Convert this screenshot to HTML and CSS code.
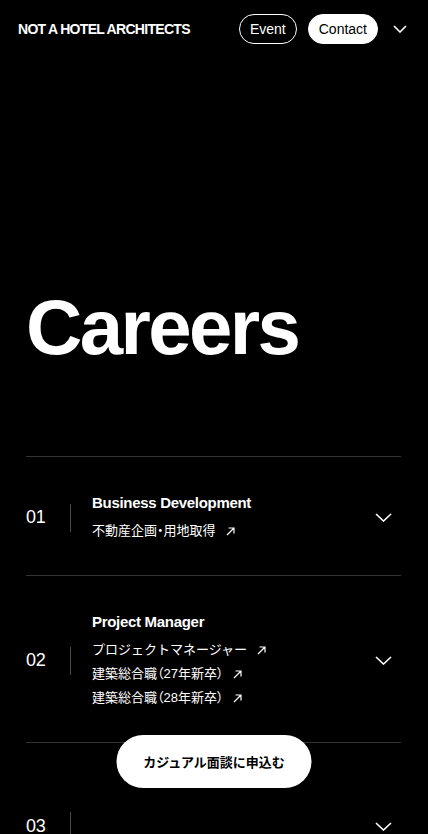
FILE: index.html
```html
<!DOCTYPE html>
<html lang="ja">
<head>
    <meta charset="UTF-8">
    <meta name="viewport" content="width=device-width, initial-scale=1.0">
    <title>Careers - NOT A HOTEL ARCHITECTS</title>
    <link rel="stylesheet" href="styles.css">
</head>
<body>
    <header class="site-header">
        <a class="logo" href="#">NOT A HOTEL ARCHITECTS</a>
        <nav class="header-nav">
            <a class="pill pill-outline" href="#">Event</a>
            <a class="pill pill-solid" href="#">Contact</a>
            <button type="button" class="menu-toggle" aria-label="Menu">
                <svg width="14" height="8" viewBox="0 0 14 8" fill="none"><path d="M1 1l6 6 6-6" stroke="#fff" stroke-width="1.6"/></svg>
            </button>
        </nav>
    </header>

    <main>
        <section class="hero">
            <h1>Careers</h1>
        </section>

        <ul class="job-list">
            <li class="job">
                <span class="job-num">01</span>
                <span class="job-rule"></span>
                <div class="job-body">
                    <h2>Business Development</h2>
                    <a class="job-link" href="#">不動産企画・用地取得<svg class="arrow" width="9" height="9" viewBox="0 0 9 9" fill="none"><path d="M1 8L8 1M2.5 1H8v5.5" stroke="#fff" stroke-width="1.2"/></svg></a>
                </div>
                <span class="job-toggle">
                    <svg width="17" height="9" viewBox="0 0 17 9" fill="none"><path d="M1 1l7.5 7 7.5-7" stroke="#fff" stroke-width="1.6"/></svg>
                </span>
            </li>
            <li class="job">
                <span class="job-num">02</span>
                <span class="job-rule"></span>
                <div class="job-body">
                    <h2>Project Manager</h2>
                    <a class="job-link job-link-kana" href="#">プロジェクトマネージャー<svg class="arrow" width="9" height="9" viewBox="0 0 9 9" fill="none"><path d="M1 8L8 1M2.5 1H8v5.5" stroke="#fff" stroke-width="1.2"/></svg></a>
                    <a class="job-link" href="#">建築総合職（27年新卒）<svg class="arrow" width="9" height="9" viewBox="0 0 9 9" fill="none"><path d="M1 8L8 1M2.5 1H8v5.5" stroke="#fff" stroke-width="1.2"/></svg></a>
                    <a class="job-link" href="#">建築総合職（28年新卒）<svg class="arrow" width="9" height="9" viewBox="0 0 9 9" fill="none"><path d="M1 8L8 1M2.5 1H8v5.5" stroke="#fff" stroke-width="1.2"/></svg></a>
                </div>
                <span class="job-toggle">
                    <svg width="17" height="9" viewBox="0 0 17 9" fill="none"><path d="M1 1l7.5 7 7.5-7" stroke="#fff" stroke-width="1.6"/></svg>
                </span>
            </li>
            <li class="job">
                <span class="job-num">03</span>
                <span class="job-rule"></span>
                <div class="job-body job-body-pending"></div>
                <span class="job-toggle">
                    <svg width="17" height="9" viewBox="0 0 17 9" fill="none"><path d="M1 1l7.5 7 7.5-7" stroke="#fff" stroke-width="1.6"/></svg>
                </span>
            </li>
        </ul>
    </main>

    <a class="cta" href="#">カジュアル面談に申込む</a>
</body>
</html>
```

FILE: styles.css
```css
:root {
    --bg: #000;
    --white: #fff;
    --line: #333;
    --rule: #4a4a4a;
    --latin: 'Liberation Sans', Arial, sans-serif;
    --jp: 'Liberation Sans', 'Noto Sans CJK JP', sans-serif;
}

* {
    box-sizing: border-box;
}

body {
    margin: 0;
    background-color: var(--bg);
    color: var(--white);
    font-family: var(--jp);
    min-height: 100vh;
}

a {
    color: inherit;
    text-decoration: none;
}

/* header */
.site-header {
    height: 58px;
    display: flex;
    align-items: center;
    justify-content: space-between;
    padding: 0 20px 0 18px;
}

.logo {
    font-family: var(--latin);
    font-weight: bold;
    font-size: 14px;
    letter-spacing: -0.7px;
}

.header-nav {
    display: flex;
    align-items: center;
}

.pill {
    font-family: var(--latin);
    font-size: 14px;
    height: 30px;
    line-height: 28px;
    padding: 0 10px;
    border-radius: 15px;
    border: 1px solid var(--white);
}

.pill-outline {
    margin-right: 11px;
}

.pill-solid {
    background-color: var(--white);
    color: #000;
}

.menu-toggle {
    background: none;
    border: none;
    padding: 0;
    margin-left: 14px;
    width: 16px;
    height: 16px;
    display: flex;
    align-items: center;
    justify-content: center;
}

/* hero */
main {
    padding: 0 27px 0 26px;
}

.hero {
    padding-top: 230px;
    padding-bottom: 90px;
}

h1 {
    margin: 0;
    font-family: var(--latin);
    font-weight: bold;
    font-size: 78px;
    line-height: 1;
    letter-spacing: -2.6px;
}

/* job list */
.job-list {
    list-style: none;
    margin: 0;
    padding: 0;
}

.job {
    display: flex;
    align-items: center;
    border-top: 1px solid var(--line);
    padding: 35px 0 32px;
}

.job-num {
    width: 44px;
    font-family: var(--latin);
    font-size: 18px;
    letter-spacing: -0.3px;
}

.job-rule {
    width: 1px;
    height: 28px;
    background-color: var(--rule);
}

.job-body {
    flex: 1;
    margin-left: 21px;
    display: flex;
    flex-direction: column;
    align-items: flex-start;
}

.job-body-pending {
    min-height: 96px;
}

.job-body h2 {
    margin: 0 0 5px;
    font-family: var(--latin);
    font-weight: bold;
    font-size: 15px;
    line-height: 22px;
    letter-spacing: -0.3px;
}

.job-link {
    font-size: 13px;
    line-height: 24px;
    display: flex;
    align-items: center;
    font-feature-settings: "palt";
}

.job-link-kana {
    font-feature-settings: normal;
}

.arrow {
    margin-left: 10px;
}

.job-toggle {
    display: flex;
    margin-right: 9px;
}

/* floating button */
.cta {
    position: fixed;
    left: 50%;
    bottom: 46px;
    transform: translateX(-50%);
    width: 195px;
    height: 53px;
    border-radius: 27px;
    background-color: var(--white);
    color: #000;
    font-size: 13px;
    font-weight: bold;
    display: flex;
    align-items: center;
    justify-content: center;
}
```
